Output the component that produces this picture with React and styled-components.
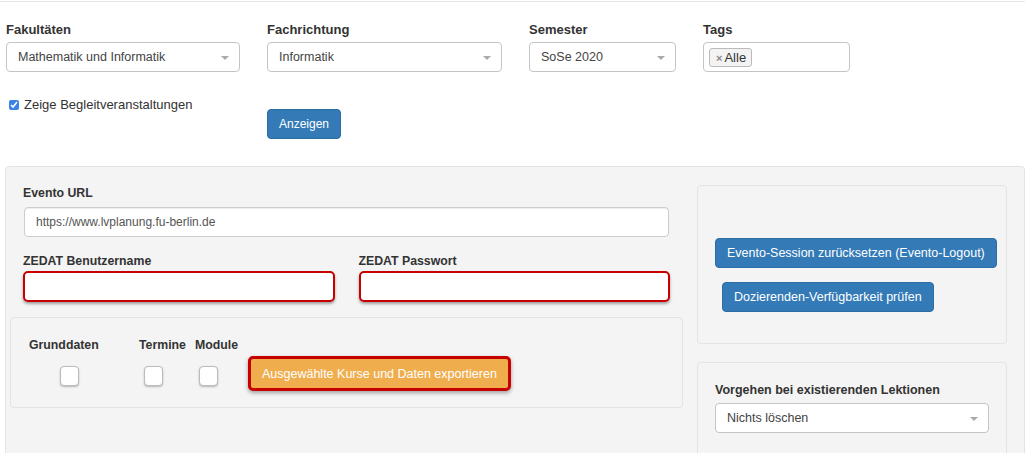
import React from 'react';
import styled, { createGlobalStyle } from 'styled-components';

const Global = createGlobalStyle`
	body {
		margin: 0;
		background: #fff;
		font-family: "Liberation Sans", Arial, sans-serif;
		color: #333;
	}
`

const Page = styled.div`
	width: 1036px;
	height: 453px;
	overflow: hidden;
`

const Rule = styled.div`
	height: 1px;
	width: 1025px;
	margin-top: 1px;
	background: #e8e8e8;
`

const FilterRow = styled.div`
	display: flex;
	gap: 27px;
	padding: 19px 0 0 6px;
`

const Field = styled.div`
	width: ${p => p.w}px;
`

const TopLabel = styled.div`
	font-size: 13px;
	font-weight: bold;
	line-height: 18px;
	margin-bottom: 3px;
`

const Select = styled.div`
	position: relative;
	height: 30px;
	box-sizing: border-box;
	border: 1px solid #c4c4c4;
	border-radius: 4px;
	background: #fff;
	padding: 0 11px;
	display: flex;
	align-items: center;
	font-size: 12.5px;
	color: #444;
	&::after {
		content: "";
		position: absolute;
		right: 10px;
		top: 13px;
		border-left: 4px solid transparent;
		border-right: 4px solid transparent;
		border-top: 4px solid #aaa;
	}
`

const TagBox = styled.div`
	height: 30px;
	box-sizing: border-box;
	border: 1px solid #c4c4c4;
	border-radius: 4px;
	background: #fff;
	padding: 5px 5px;
	display: flex;
	align-items: flex-start;
`

const Chip = styled.span`
	display: inline-flex;
	align-items: center;
	height: 19px;
	box-sizing: border-box;
	border: 1px solid #bbb;
	border-radius: 3px;
	background: #f3f3f3;
	padding: 0 5px 0 6px;
	font-size: 13px;
	color: #333;
	.x {
		color: #888;
		font-weight: bold;
		font-size: 11px;
		margin-right: 2px;
	}
`

const ActionRow = styled.div`
	display: flex;
	padding: 24px 0 0 9px;
	height: 70px;
	box-sizing: border-box;
`

const CheckLine = styled.label`
	width: 258px;
	display: flex;
	align-items: center;
	font-size: 13px;
	line-height: 17px;
	height: 17px;
	color: #333;
	input {
		margin: 0 5px 0 0;
		width: 10px;
		height: 10px;
		accent-color: #3b82e6;
	}
`

const Btn = styled.button`
	font-family: inherit;
	font-size: ${p => p.fs || 12.5}px;
	line-height: 17px;
	color: #fff;
	background: #337ab7;
	border: 1px solid #2e6da4;
	border-radius: 4px;
	padding: 6px 11px;
	height: 30px;
	margin-top: ${p => p.mt || 0}px;
	margin-left: ${p => p.ml || 0}px;
	white-space: nowrap;
	cursor: pointer;
`

const Panel = styled.div`
	margin: 24px 0 0 5px;
	width: 1020px;
	height: 300px;
	box-sizing: border-box;
	background: #f4f4f4;
	border: 1px solid #e3e3e3;
	border-radius: 4px;
	padding: 18px 17px 0 4px;
	display: flex;
	gap: 14px;
`

const LeftCol = styled.div`
	width: 674px;
`

const Form = styled.div`
	padding: 0 13px;
`

const Label = styled.div`
	font-size: ${p => p.fs || 12.3}px;
	font-weight: bold;
	line-height: 17px;
	margin-bottom: ${p => p.mb ?? 5}px;
	color: #333;
`

const Input = styled.div`
	height: 30px;
	box-sizing: border-box;
	border: 1px solid #ccc;
	border-radius: 4px;
	background: #fff;
	box-shadow: inset 0 1px 1px rgba(0,0,0,.075);
	padding: 0 11px;
	display: flex;
	align-items: center;
	font-size: 12px;
	color: #555;
	margin-left: 1px;
	margin-right: 1px;
`

const CredRow = styled.div`
	display: flex;
	gap: 24px;
	margin-top: 16px;
	> div { flex: 1; }
`

const RedInput = styled.div`
	height: 31px;
	box-sizing: border-box;
	border: 2px solid #c70000;
	border-radius: 5px;
	background: #fff;
	box-shadow: 0 2px 3px rgba(0,0,0,.35);
`

const Well = styled.div`
	box-sizing: border-box;
	background: #f4f4f4;
	border: 1px solid #e3e3e3;
	border-radius: 4px;
	height: ${p => p.h}px;
	margin-top: ${p => p.mt || 0}px;
	padding: ${p => p.pad};
`

const ExportRow = styled.div`
	display: flex;
	align-items: flex-start;
`

const CheckCol = styled.div`
	width: ${p => p.w}px;
	display: flex;
	flex-direction: column;
`

const BoxLabel = styled.div`
	font-size: 12.3px;
	font-weight: bold;
	line-height: 17px;
	color: #333;
	white-space: nowrap;
`

const Box = styled.span`
	display: block;
	width: 19px;
	height: 20px;
	box-sizing: border-box;
	margin: 12px 0 0 ${p => p.ml}px;
	background: #fff;
	border: 1px solid #bbb;
	border-radius: 4px;
	box-shadow: 0 1px 2px rgba(0,0,0,.25);
`

const ExportBtn = styled.button`
	font-family: inherit;
	font-size: 12.5px;
	color: #fff;
	background: #f0ad4e;
	border: 3px solid #c70000;
	border-radius: 5px;
	height: 35px;
	padding: 0 11px;
	margin-top: 19px;
	white-space: nowrap;
	box-shadow: 0 2px 4px rgba(0,0,0,.35);
	cursor: pointer;
`

const RightCol = styled.div`
	width: 310px;
`

const ButtonStack = styled.div`
	display: flex;
	flex-direction: column;
	align-items: flex-start;
	gap: 14px;
`

const App = () => {
	return (
		<Page>
			<Global />
			<Rule />
			<FilterRow>
				<Field w={234}>
					<TopLabel>Fakultäten</TopLabel>
					<Select>Mathematik und Informatik</Select>
				</Field>
				<Field w={235}>
					<TopLabel>Fachrichtung</TopLabel>
					<Select>Informatik</Select>
				</Field>
				<Field w={147}>
					<TopLabel>Semester</TopLabel>
					<Select>SoSe 2020</Select>
				</Field>
				<Field w={147}>
					<TopLabel>Tags</TopLabel>
					<TagBox>
						<Chip><span className="x">×</span>Alle</Chip>
					</TagBox>
				</Field>
			</FilterRow>

			<ActionRow>
				<CheckLine>
					<input type="checkbox" defaultChecked />
					Zeige Begleitveranstaltungen
				</CheckLine>
				<Btn mt={13} fs={12}>Anzeigen</Btn>
			</ActionRow>

			<Panel>
				<LeftCol>
					<Form>
						<Label>Evento URL</Label>
						<Input>https://www.lvplanung.fu-berlin.de</Input>
						<CredRow>
							<div>
								<Label mb={1}>ZEDAT Benutzername</Label>
								<RedInput />
							</div>
							<div>
								<Label mb={1}>ZEDAT Passwort</Label>
								<RedInput />
							</div>
						</CredRow>
					</Form>
					<Well h={91} mt={15} pad="19px 18px">
						<ExportRow>
							<CheckCol w={110}>
								<BoxLabel>Grunddaten</BoxLabel>
								<Box ml={31} />
							</CheckCol>
							<CheckCol w={56}>
								<BoxLabel>Termine</BoxLabel>
								<Box ml={5} />
							</CheckCol>
							<CheckCol w={53}>
								<BoxLabel>Module</BoxLabel>
								<Box ml={4} />
							</CheckCol>
							<ExportBtn>Ausgewählte Kurse und Daten exportieren</ExportBtn>
						</ExportRow>
					</Well>
				</LeftCol>
				<RightCol>
					<Well h={159} pad="52px 17px 0">
						<ButtonStack>
							<Btn>Evento-Session zurücksetzen (Evento-Logout)</Btn>
							<Btn ml={7}>Dozierenden-Verfügbarkeit prüfen</Btn>
						</ButtonStack>
					</Well>
					<Well h={120} mt={18} pad="19px 17px">
						<Label mb={4} fs={12.5}>Vorgehen bei existierenden Lektionen</Label>
						<Select style={{ width: 274 }}>Nichts löschen</Select>
					</Well>
				</RightCol>
			</Panel>
		</Page>
	);
}

export default App;
